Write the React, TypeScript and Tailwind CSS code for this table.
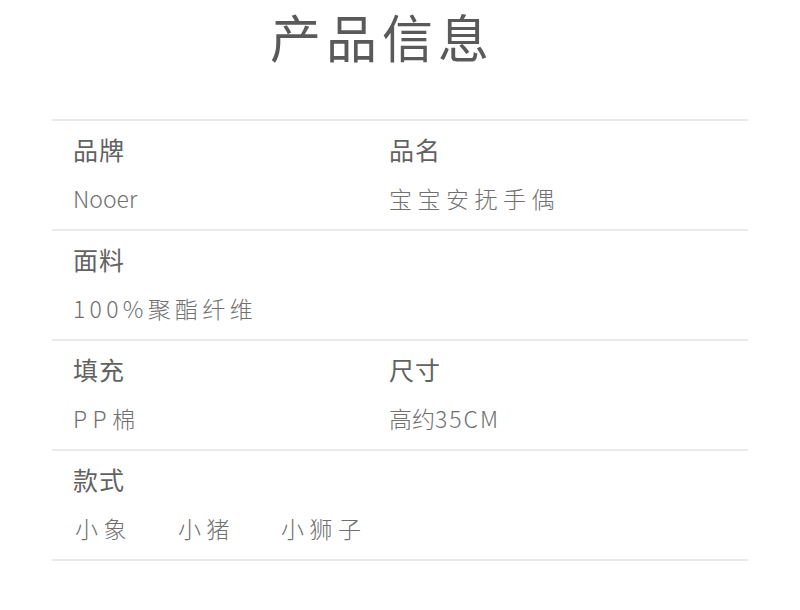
import React from "react";

const font = { fontFamily: '"Noto Sans CJK SC", "Noto Sans", sans-serif' };

function Label({ children }: { children: React.ReactNode }) {
  return <div className="text-[25px] leading-[32px] text-[#626262] tracking-[1px]">{children}</div>;
}
function Value({ children, cls = "tracking-[5.5px]" }: { children: React.ReactNode; cls?: string }) {
  return <div className={"mt-[19px] text-[23px] leading-[28px] text-[#707070] font-light " + cls}>{children}</div>;
}

export default function App() {
  return (
    <div className="w-[800px] h-[610px] bg-white" style={font}>
      <div className="h-[119px] flex justify-center pr-[36px] pt-[7px]">
        <div className="text-[51px] leading-[58px] text-[#5a5a5a] tracking-[5px]">产品信息</div>
      </div>
      <div className="mx-[52px]">
        <div className="h-[110px] border-t-2 border-[#ebebeb] grid grid-cols-[337px_1fr] pt-[12px]">
          <div className="pl-[21px]">
            <Label>品牌</Label>
            <Value cls="tracking-[0px]">Nooer</Value>
          </div>
          <div>
            <Label>品名</Label>
            <Value>宝宝安抚手偶</Value>
          </div>
        </div>
        <div className="h-[110px] border-t-2 border-[#ebebeb] pt-[12px] pl-[21px]">
          <Label>面料</Label>
          <Value cls="tracking-[4.3px]">100%聚酯纤维</Value>
        </div>
        <div className="h-[110px] border-t-2 border-[#ebebeb] grid grid-cols-[337px_1fr] pt-[12px]">
          <div className="pl-[21px]">
            <Label>填充</Label>
            <Value>PP棉</Value>
          </div>
          <div>
            <Label>尺寸</Label>
            <Value cls="tracking-[0px]">
              高约<span className="tracking-[2px]">35CM</span>
            </Value>
          </div>
        </div>
        <div className="h-[112px] border-t-2 border-b-2 border-[#ebebeb] pt-[12px] pl-[21px]">
          <Label>款式</Label>
          <div className="mt-[19px] flex gap-[46px] text-[23px] leading-[28px] text-[#707070] font-light tracking-[5.5px] pl-[2px]">
            <span>小象</span>
            <span>小猪</span>
            <span>小狮子</span>
          </div>
        </div>
      </div>
    </div>
  );
}
